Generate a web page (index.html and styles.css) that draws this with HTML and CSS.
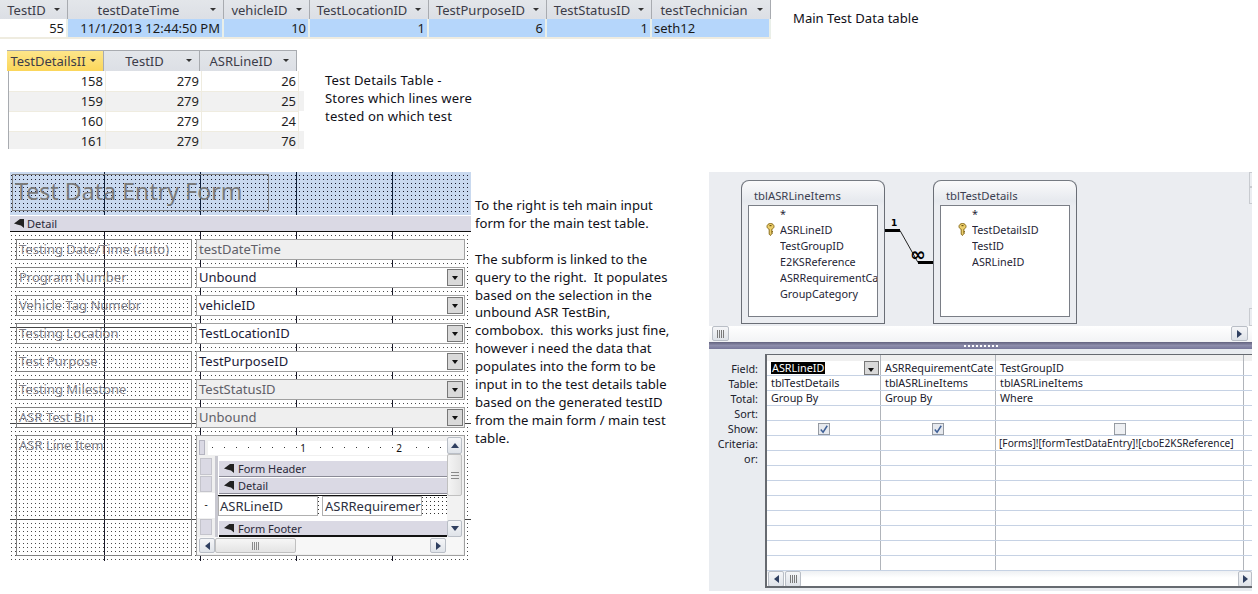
FILE: index.html
```html
<!DOCTYPE html>
<html lang="en">
<head>
<meta charset="utf-8">
<title>Test Data Entry</title>
<link rel="stylesheet" href="styles.css">
</head>
<body>
<main class="canvas">

  <section class="piece sheet-main">
    <div class="sheet-row head">
      <div class="hc">TestID<i class="caret"></i></div>
      <div class="hc">testDateTime<i class="caret"></i></div>
      <div class="hc">vehicleID<i class="caret"></i></div>
      <div class="hc">TestLocationID<i class="caret"></i></div>
      <div class="hc">TestPurposeID<i class="caret"></i></div>
      <div class="hc">TestStatusID<i class="caret"></i></div>
      <div class="hc">testTechnician<i class="caret"></i></div>
    </div>
    <div class="sheet-row body">
      <div class="dc num plain">55</div>
      <div class="dc num">11/1/2013 12:44:50 PM</div>
      <div class="dc num">10</div>
      <div class="dc num">1</div>
      <div class="dc num">6</div>
      <div class="dc num">1</div>
      <div class="dc">seth12</div>
    </div>
  </section>

  <p class="piece note note-main">Main Test Data table</p>

  <section class="piece sheet-details">
    <div class="det-head">
      <div class="hc active">TestDetailsII<i class="caret"></i></div>
      <div class="hc">TestID<i class="caret"></i></div>
      <div class="hc">ASRLineID<i class="caret"></i></div>
    </div>
    <div class="det-row"><div>158</div><div>279</div><div>26</div></div>
    <div class="det-row alt"><div>159</div><div>279</div><div>25</div></div>
    <div class="det-row"><div>160</div><div>279</div><div>24</div></div>
    <div class="det-row alt last"><div>161</div><div>279</div><div>76</div></div>
  </section>

  <p class="piece note note-details">Test Details Table -<br>Stores which lines were<br>tested on which test</p>

  <section class="piece form">
    <div class="form-head"><div class="form-title">Test Data Entry Form</div></div>
    <div class="band"><i class="chev"></i>Detail</div>
    <div class="form-body">
      <div class="frow"><div class="lbl">Testing Date/Time (auto)</div><div class="inp off">testDateTime</div></div>
      <div class="frow"><div class="lbl">Program Number</div><div class="inp">Unbound<i class="drop"></i></div></div>
      <div class="frow"><div class="lbl">Vehicle Tag Numebr</div><div class="inp">vehicleID<i class="drop"></i></div></div>
      <div class="frow"><div class="lbl">Testing Location</div><div class="inp">TestLocationID<i class="drop"></i></div></div>
      <div class="frow"><div class="lbl">Test Purpose</div><div class="inp">TestPurposeID<i class="drop"></i></div></div>
      <div class="frow"><div class="lbl">Testing Milestone</div><div class="inp off">TestStatusID<i class="drop"></i></div></div>
      <div class="frow"><div class="lbl">ASR Test Bin</div><div class="inp off">Unbound<i class="drop"></i></div></div>
      <div class="frow">
        <div class="lbl">ASR Line Item</div>
        <div class="sub">
          <div class="sub-main">
            <div class="sub-top"><div class="corner"></div><div class="ruler"><span>1</span><span>2</span></div></div>
            <div class="sub-grid">
              <div class="sub-side">
                <div class="sbox"></div>
                <div class="sbox"></div>
                <div class="stick">-</div>
                <div class="sbox"></div>
              </div>
              <div class="sub-design">
                <div class="sband"><i class="chev"></i>Form Header</div>
                <div class="sband"><i class="chev"></i>Detail</div>
                <div class="sfields"><div class="sf one">ASRLineID</div><div class="sf two">ASRRequiremer</div></div>
                <div class="sband foot"><i class="chev"></i>Form Footer</div>
              </div>
            </div>
          </div>
          <div class="vbar">
            <div class="sbtn"><i class="tri up"></i></div>
            <div class="vthumb"><b></b></div>
            <div class="sbtn"><i class="tri down"></i></div>
          </div>
          <div class="hbar">
            <div class="sbtn w"><i class="tri left"></i></div>
            <div class="hthumb"><b></b></div>
            <div class="sbtn w"><i class="tri right"></i></div>
          </div>
        </div>
      </div>
    </div>
  </section>

  <p class="piece note note-form">To the right is teh main input<br>form for the main test table.<br><br>The subform is linked to the<br>query to the right.&nbsp; It populates<br>based on the selection in the<br>unbound ASR TestBin,<br>combobox.&nbsp; this works just fine,<br>however i need the data that<br>populates into the form to be<br>input in to the test details table<br>based on the generated testID<br>from the main form / main test<br>table.</p>

  <section class="piece query">
    <div class="q-top">
      <div class="tbl">
        <div class="tbl-title">tblASRLineItems</div>
        <div class="tbl-list">
          <div class="fld"><span></span><span>*</span></div>
          <div class="fld"><svg class="key" viewBox="0 0 9 13"><path d="M4.500.5C6.500.5 8 1.800 8 3.500 8 4.800 7 5.800 5.800 6.200V10.500L4.500 12.500 3.200 11.300V6.200C2 5.800 1 4.800 1 3.500 1 1.800 2.500.5 4.500.5Z" fill="#ecce6a" stroke="#8a6d1c"/><rect x="3.500" y="2" width="2" height="1.200" fill="#6b5312"/><path d="M5.800 8.500H7M5.800 10H7" stroke="#8a6d1c"/></svg><span>ASRLineID</span></div>
          <div class="fld"><span></span><span>TestGroupID</span></div>
          <div class="fld"><span></span><span>E2KSReference</span></div>
          <div class="fld"><span></span><span class="clip">ASRRequirementCa</span></div>
          <div class="fld"><span></span><span>GroupCategory</span></div>
        </div>
      </div>
      <svg class="rel" viewBox="0 0 48 100" width="48" height="100">
        <path d="M0 50.500H15M33 82.500H48" stroke="#000" stroke-width="3"/>
        <path d="M15 50.500L33 82.500" stroke="#222" fill="none"/>
        <text class="rel-one" x="6" y="46">1</text>
        <text class="rel-many" x="25" y="81">∞</text>
      </svg>
      <div class="tbl">
        <div class="tbl-title">tblTestDetails</div>
        <div class="tbl-list">
          <div class="fld"><span></span><span>*</span></div>
          <div class="fld"><svg class="key" viewBox="0 0 9 13"><path d="M4.500.5C6.500.5 8 1.800 8 3.500 8 4.800 7 5.800 5.800 6.200V10.500L4.500 12.500 3.200 11.300V6.200C2 5.800 1 4.800 1 3.500 1 1.800 2.500.5 4.500.5Z" fill="#ecce6a" stroke="#8a6d1c"/><rect x="3.500" y="2" width="2" height="1.200" fill="#6b5312"/><path d="M5.800 8.500H7M5.800 10H7" stroke="#8a6d1c"/></svg><span>TestDetailsID</span></div>
          <div class="fld"><span></span><span>TestID</span></div>
          <div class="fld"><span></span><span>ASRLineID</span></div>
        </div>
      </div>
      <div class="edge"><b></b><b></b><b class="low"></b></div>
    </div>
    <div class="q-scroll">
      <div class="sbtn grip"><b></b></div>
      <div class="sbtn end"><i class="tri right"></i></div>
    </div>
    <div class="splitter"><b></b></div>
    <div class="q-low">
      <div class="q-labels">
        <div>Field:</div><div>Table:</div><div>Total:</div><div>Sort:</div><div>Show:</div><div>Criteria:</div><div>or:</div>
      </div>
      <div class="q-grid">
        <div class="qr strip"><div></div><div></div><div></div><div></div></div>
        <div class="qr"><div class="fcell"><em>ASRLineID</em><i class="drop q"></i></div><div>ASRRequirementCate</div><div>TestGroupID</div><div></div></div>
        <div class="qr"><div>tblTestDetails</div><div>tblASRLineItems</div><div>tblASRLineItems</div><div></div></div>
        <div class="qr"><div>Group By</div><div>Group By</div><div>Where</div><div></div></div>
        <div class="qr"><div></div><div></div><div></div><div></div></div>
        <div class="qr chk"><div><svg class="cb" viewBox="0 0 13 13"><rect x=".5" y=".5" width="12" height="12" fill="#e6e9ee" stroke="#8f959c"/><path d="M3 7l2.500 3L10 3" fill="none" stroke="#3e5f96" stroke-width="1.600"/></svg></div><div><svg class="cb" viewBox="0 0 13 13"><rect x=".5" y=".5" width="12" height="12" fill="#e6e9ee" stroke="#8f959c"/><path d="M3 7l2.500 3L10 3" fill="none" stroke="#3e5f96" stroke-width="1.600"/></svg></div><div><svg class="cb" viewBox="0 0 13 13"><rect x=".5" y=".5" width="12" height="12" fill="#eef0f3" stroke="#8f959c"/></svg></div><div></div></div>
        <div class="qr"><div></div><div></div><div class="crit">[Forms]![formTestDataEntry]![cboE2KSReference]</div><div></div></div>
        <div class="qr"><div></div><div></div><div></div><div></div></div>
        <div class="qr"><div></div><div></div><div></div><div></div></div>
        <div class="qr"><div></div><div></div><div></div><div></div></div>
        <div class="qr"><div></div><div></div><div></div><div></div></div>
        <div class="qr"><div></div><div></div><div></div><div></div></div>
        <div class="qr"><div></div><div></div><div></div><div></div></div>
        <div class="qr"><div></div><div></div><div></div><div></div></div>
        <div class="qr"><div></div><div></div><div></div><div></div></div>
        <div class="q-hbar">
          <div class="sbtn lb"><i class="tri left"></i></div>
          <div class="sbtn grip small"><b></b></div>
          <div class="sbtn rb"><i class="tri right"></i></div>
        </div>
      </div>
    </div>
  </section>

</main>
</body>
</html>
```

FILE: styles.css
```css
* { box-sizing: border-box; }
html, body { margin: 0; background: #fff; }
body { font-family: "Noto Sans", Lato, sans-serif; color: #1c1c24; overflow: hidden; }
.canvas { position: relative; width: 1258px; height: 594px; overflow: hidden; }
.piece { position: absolute; margin: 0; }

/* text notes */
.note { font-family: "Noto Sans", sans-serif; font-size: 13.100px; line-height: 17.900px; color: #101018; white-space: nowrap; }
.note-main { left: 793px; top: 10px; }
.note-details { left: 325px; top: 72px; letter-spacing: .15px; }
.note-form { left: 475px; top: 197px; }

/* datasheets */
.sheet-main { left: 0; top: 0; width: 771px; font-size: 13px; }
.sheet-row { display: grid; grid-template-columns: 68px 156px 86px 119px 118px 105px 119px; }
.head { height: 19px; background: linear-gradient(#e3e6ea, #dcdfe5); }
.hc { position: relative; display: flex; align-items: center; justify-content: center; padding-right: 14px; border-right: 1px solid #a8abb0; color: #3c3c48; white-space: nowrap; overflow: hidden; font-size: 13px; }
.caret { position: absolute; right: 7px; top: 8px; width: 0; height: 0; border: 3px solid transparent; border-top: 3px solid #333; border-bottom: 0; }
.body { height: 20px; background: #b5d6fb; border-bottom: 2px solid #efece0; }
.dc { display: flex; align-items: center; padding: 0 2px; line-height: 18px; border-right: 2px solid #e9efe9; color: #1a1a1a; white-space: nowrap; overflow: hidden; }
.num { justify-content: flex-end; }
.plain { background: #fff; }

.sheet-details { left: 7px; top: 50px; width: 297px; font-size: 13px; }
.det-head { display: grid; grid-template-columns: 97px 96px 97px; width: 290px; height: 21px; background: linear-gradient(#e3e6ea, #dcdfe5); border-top: 1px solid #a8abb0; }
.active { background: linear-gradient(#fde68a, #fbd65a); }
.det-row { display: grid; grid-template-columns: 97px 96px 97px 7px; height: 20px; margin-left: 1px; border-left: 1px solid #a8abb0; color: #1f1f1f; background: #fff; }
.det-row > div { text-align: right; padding-right: 2px; line-height: 20px; border-right: 1px solid #efece0; border-bottom: 1px solid #efece0; }
.alt { background: #f1f1f1; }
.last { height: 18px; overflow: hidden; }

/* form design view */
.form { left: 10px; top: 172px; width: 461px; height: 389px; font-size: 13px; }
.form-head {
  height: 43px; padding: 2px;
  background-color: #c9d9ef;
  background-image:
    linear-gradient(#10203a, #10203a), linear-gradient(#10203a, #10203a), linear-gradient(#10203a, #10203a), linear-gradient(#10203a, #10203a),
    conic-gradient(from 270deg at 1px 1px, #1a1a2a 25%, transparent 0);
  background-size: 1px 100%, 1px 100%, 1px 100%, 1px 100%, 4px 4px;
  background-position: 94px 0, 190px 0, 286px 0, 382px 0, 1px 3px;
  background-repeat: no-repeat, no-repeat, no-repeat, no-repeat, repeat;
}
.form-title { width: 257px; height: 37px; border: 1px solid #808080; padding-left: 2px; font-size: 23.200px; line-height: 33px; color: #7a7a7a; white-space: nowrap; }
.band { display: flex; align-items: center; gap: 3px; height: 16px; margin-top: 1px; padding-left: 4px; background: #dad9e4; border-bottom: 1px solid #111; font-size: 11px; color: #2a2a3a; }
.chev { display: inline-block; width: 10px; height: 9px; background: #222; clip-path: polygon(0 50%, 60% 0, 100% 0, 100% 100%, 70% 72%, 40% 65%); }
.form-body {
  height: 329px; padding: 7px 6px 0;
  display: flex; flex-direction: column; gap: 7px;
  background-color: #fff;
  background-image:
    linear-gradient(#444, #444), linear-gradient(#444, #444), linear-gradient(#444, #444),
    linear-gradient(#1a1a2a, #1a1a2a), linear-gradient(#1a1a2a, #1a1a2a), linear-gradient(#1a1a2a, #1a1a2a), linear-gradient(#1a1a2a, #1a1a2a),
    conic-gradient(from 270deg at 1px 1px, #4a4a4a 25%, transparent 0);
  background-size: 100% 1px, 100% 1px, 100% 1px, 1px 100%, 1px 100%, 1px 100%, 1px 100%, 4px 4px;
  background-position: 0 95px, 0 191px, 0 287px, 94px 0, 190px 0, 286px 0, 382px 0, 1px 3px;
  background-repeat: no-repeat, no-repeat, no-repeat, no-repeat, no-repeat, no-repeat, no-repeat, repeat;
}
.frow { display: grid; grid-template-columns: 176px 269px; gap: 4px; height: 21px; }
.lbl { border: 1px solid #808080; padding-left: 2px; line-height: 18px; color: #7f7f88; white-space: nowrap; overflow: hidden; }
.inp { position: relative; border: 1px solid #a0a0a0; background: #fff; padding-left: 2px; line-height: 19px; color: #1c2038; white-space: nowrap; }
.inp.off { background: #efefef; color: #606068; }
.drop { position: absolute; right: 1px; top: 1px; width: 16px; height: 17px; background: #d9d9d9; border: 1px solid #777; }
.drop::after { content: ""; position: absolute; left: 4px; top: 6px; border: 3.500px solid transparent; border-top: 4px solid #111; border-bottom: 0; }

/* subform */
.sub { display: grid; grid-template-columns: 250px 16px; grid-template-rows: 101px 17px; width: 269px; height: 121px; background: #f0f0f0; border: 1px solid #a0a0a0; }
.sub-main { overflow: hidden; background: #fff; }
.sub-top { display: flex; height: 20px; gap: 3px; background: #f0f0f0; padding: 4px 0 0 2px; }
.corner { width: 16px; height: 15px; background: #dad9e4; border: 1px solid #b4b4c0; }
.ruler { flex: 1; height: 14px; margin-top: 1px; display: grid; grid-template-columns: 96px 96px; padding-left: 47px; background: #fff repeating-linear-gradient(90deg, #333 0 1px, transparent 1px 12px) 4px 6px / 100% 1px no-repeat; font-size: 10px; line-height: 14px; color: #111; }
.ruler span { text-align: center; background: #fff; width: 12px; justify-self: center; }
.sub-grid { display: flex; height: 81px; }
.sub-side { display: flex; flex-direction: column; width: 21px; padding: 2px 3px 0; background: #f0f0f0; border-right: 3px solid #c8c8d0; gap: 1px; }
.sbox { height: 16px; flex: none; background: #dad9e4; border: 1px solid #c4c4cc; }
.sub-side .sbox:first-child { height: 17px; }
.stick { height: 25px; flex: none; margin: 0 -3px; background: #fff; text-align: center; font-size: 10px; line-height: 22px; color: #111; }
.sub-design { flex: 1; min-width: 0; padding-top: 5px; padding-left: 1px; background: #fff; overflow: hidden; }
.sband { display: flex; align-items: center; gap: 4px; height: 16px; margin-bottom: 1px; padding-left: 5px; background: #dad9e4; border-bottom: 1px solid #8a8a96; font-size: 11px; color: #2a2a3a; white-space: nowrap; }
.sband.foot { margin-top: 6px; border-bottom: 2px solid #111; }
.sfields { display: flex; height: 20px; margin-left: -1px; border-top: 1px solid #111; background: conic-gradient(from 270deg at 1px 1px, #333 25%, transparent 0) 0 1px / 4px 4px; }
.sf { height: 20px; padding-left: 1px; line-height: 19px; background: #fff; border: 1px solid #b0b0b0; color: #2c3040; font-size: 13px; overflow: hidden; white-space: nowrap; }
.one { width: 100px; }
.two { width: 100px; margin-left: 4px; padding-left: 2px; }
.vbar { display: flex; flex-direction: column; gap: 0; padding: 1px 1px 0 0; background: #f2f2f2; }
.vbar .sbtn { height: 17px; flex: none; }
.vthumb { display: flex; align-items: center; justify-content: center; height: 44px; margin-bottom: 24px; background: linear-gradient(90deg, #f4f4f4, #e4e4e4); border: 1px solid #c0c0c0; border-radius: 2px; }
.vthumb b { width: 8px; height: 7px; background: repeating-linear-gradient(#8a8a8a 0 1px, transparent 1px 3px); }
.hbar { grid-column: 1 / 3; display: flex; align-items: center; padding: 0 17px 0 2px; background: #f7f7f7; }
.hbar .w { width: 16px; height: 15px; flex: none; }
.hthumb { display: flex; align-items: center; justify-content: center; width: 81px; height: 15px; margin-right: auto; background: linear-gradient(#f6f6f6, #e4e4e4); border: 1px solid #c0c0c0; border-radius: 2px; }
.hthumb b { width: 7px; height: 8px; background: repeating-linear-gradient(90deg, #8a8a8a 0 1px, transparent 1px 2px); }
.sbtn { display: flex; align-items: center; justify-content: center; background: linear-gradient(#f5f6f8, #dfe3e9); border: 1px solid #b9bec6; border-radius: 2px; }
.tri { width: 0; height: 0; border: 4px solid transparent; }
.tri.up { border-bottom: 5px solid #2f3f60; border-top: 0; }
.tri.down { border-top: 5px solid #2f3f60; border-bottom: 0; }
.tri.left { border-right: 5px solid #2f3f60; border-left: 0; }
.tri.right { border-left: 5px solid #2f3f60; border-right: 0; }

/* query design */
.query { left: 709px; top: 172px; width: 543px; height: 419px; background: #e9ecf0; }
.q-top { position: relative; display: flex; height: 154px; padding: 8px 0 0 32px; background: #ebedf1; }
.tbl { width: 144px; height: 144px; padding: 0 6px 6px; background: linear-gradient(#fafafb, #e6e9ee 20px, #ebedf1 25px); border: 1px solid #6a6e76; border-top-color: #757a82; border-radius: 8px 8px 0 0; }
.tbl-title { height: 24px; padding-left: 6px; line-height: 30px; font-size: 11.300px; color: #3b3f50; white-space: nowrap; }
.tbl-list { height: 112px; padding-top: 0; background: #fff; border: 1px solid #7a7e86; overflow: hidden; }
.fld { display: grid; grid-template-columns: 31px 98px; height: 16px; font-size: 10.800px; line-height: 16px; color: #252535; white-space: nowrap; }
.fld span:last-child { overflow: hidden; }
.key { width: 9px; height: 13px; justify-self: end; margin-right: 5px; margin-top: 1px; }
.rel { flex: none; width: 48px; height: 100px; overflow: visible; }
.rel-one { font: 700 9px "DejaVu Sans", sans-serif; fill: #000; }
.rel-many { font: 700 19px "DejaVu Sans", sans-serif; fill: #000; }
.edge { position: absolute; right: 0; top: 0; width: 3px; height: 154px; display: flex; flex-direction: column; }
.edge b { display: block; height: 15px; border: 1px solid #c8cbd0; border-right: 0; }
.edge b + b { height: 17px; }
.edge .low { margin-top: auto; height: 18px; }
.q-scroll { display: flex; justify-content: space-between; height: 16px; padding: 0 4px 0 3px; background: linear-gradient(#fff, #f2f3f5); }
.grip { width: 17px; height: 15px; }
.grip b { width: 7px; height: 8px; background: repeating-linear-gradient(90deg, #7a7a7a 0 1px, transparent 1px 2px); }
.end { width: 17px; height: 15px; }
.splitter { display: flex; align-items: center; justify-content: center; height: 7px; background: linear-gradient(#62627e, #8e8eac 50%, #77779a); }
.splitter b { width: 34px; height: 2px; background: repeating-linear-gradient(90deg, #fff 0 2px, transparent 2px 4px); }
.q-low { display: grid; grid-template-columns: 56px 487px; height: 242px; padding-top: 5px; background: #e9ecf0; }
.q-labels { padding: 7px 7px 0 0; text-align: right; font-size: 10.800px; line-height: 15px; color: #20202c; }
.q-grid { height: 234px; border: 2px solid #666a70; border-width: 1px 0 2px 2px; background: #fff; overflow: hidden; font-size: 10.800px; color: #20202c; }
.qr { display: grid; grid-template-columns: 114px 115px 248px 10px; height: 15px; border-bottom: 1px solid #c6d2e4; }
.qr > div { padding-left: 4px; line-height: 14px; border-right: 1px solid #b0b4ba; white-space: nowrap; overflow: hidden; }
.qr > div:last-child { border-right: 0; }
.qr > .crit { padding-left: 3px; font-size: 10.200px; }
.strip { height: 6px; background: #f0f0f0; border-bottom: 0; }
.fcell { position: relative; }
.fcell em { font-style: normal; background: #000; color: #fff; padding: 0 1px; display: inline-block; line-height: 12px; }
.drop.q { top: 0; right: 1px; width: 15px; height: 14px; }
.drop.q::after { left: 3px; top: 6px; }
.chk > div { display: flex; justify-content: center; padding: 0; }
.cb { width: 12px; height: 12px; margin-top: 2px; }
.q-hbar { display: flex; gap: 1px; height: 17px; padding: 0 0 0 1px; background: linear-gradient(#eef0f3, #fff 40%); }
.q-hbar .sbtn { height: 16px; }
.lb { width: 16px; }
.small { width: 16px; height: 16px; }
.rb { width: 14px; margin-left: auto; }
```
